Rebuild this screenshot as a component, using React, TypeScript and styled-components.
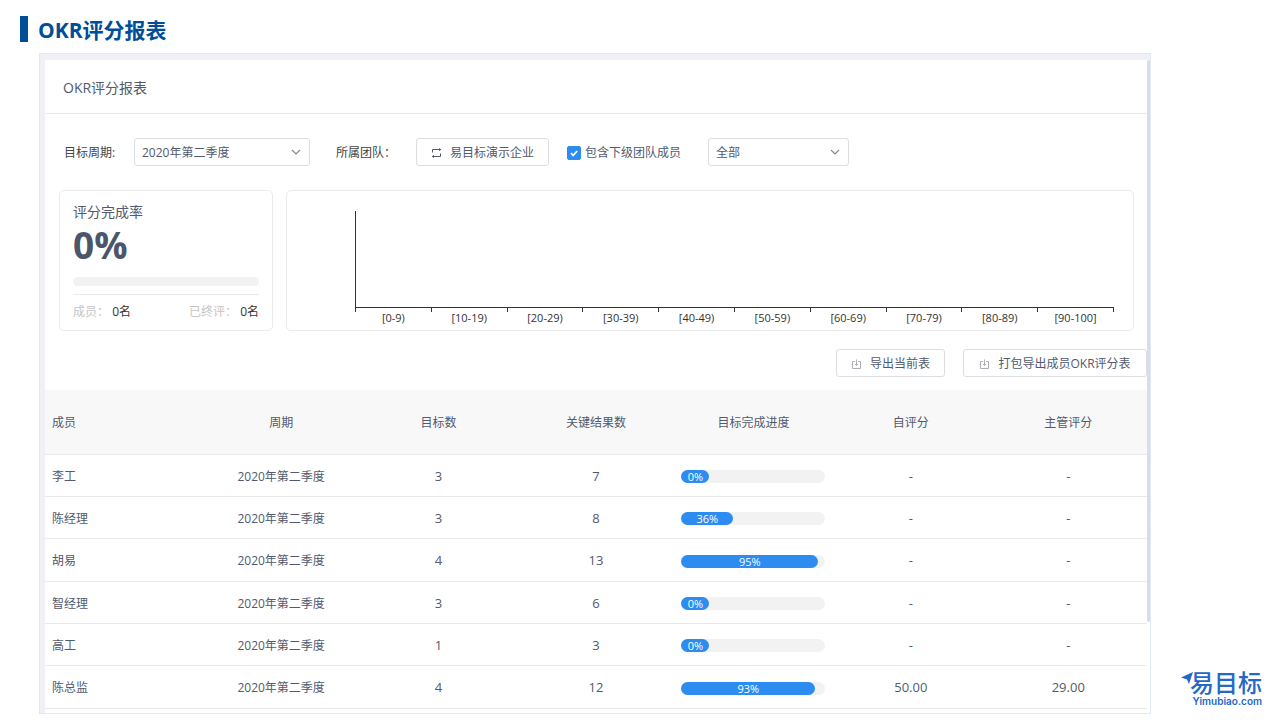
import React from "react";
import styled, { createGlobalStyle } from "styled-components";

const GlobalStyle = createGlobalStyle`
  * { box-sizing: border-box; }
  body {
    margin: 0;
    background: #fff;
    color: #515a6e;
    font: 12px/18px "Open Sans", "Noto Sans CJK SC", sans-serif;
  }
  button, select, input { font: inherit; color: inherit; }
`;

const Page = styled.div`
  display: grid;
  grid-template-columns: minmax(0, 1fr) 129px;
  padding: 16px 0 6px 20px;
`;

const Title = styled.h1`
  grid-column: 1 / -1;
  margin: 0 0 11px;
  padding: 2px 0 0 10px;
  border-left: 8px solid #004e98;
  color: #004e98;
  font-size: 21px;
  line-height: 24px;
  font-weight: 700;
`;

const Frame = styled.main`
  display: flex;
  margin-left: 19px;
  padding: 6px 0 0 5px;
  border: 1px solid #dfe8f3;
  background: #eff1f6;
`;

const Panel = styled.div`
  flex: 1;
  min-width: 0;
  padding-bottom: 4px;
  background: #fff;
`;

const ScrollRail = styled.div`
  width: 3px;
  background: #fff;
`;

const ScrollThumb = styled.div`
  height: 86%;
  border-radius: 2px;
  background: #dadee2;
`;

const PanelHeading = styled.h2`
  margin: 0;
  padding: 17px 18px 15px;
  border-bottom: 1px solid #e8eaec;
  font-size: 14px;
  line-height: 21px;
  font-weight: 400;
`;

const Filters = styled.form`
  display: flex;
  align-items: center;
  padding: 24px 19px;
`;

const FieldLabel = styled.label<{ $width: number }>`
  width: ${(p) => p.$width}px;
  padding-top: 2px;
  color: #444;
  white-space: nowrap;
`;

const SelectBox = styled.div<{ $width: number }>`
  display: grid;
  align-items: center;
  width: ${(p) => p.$width}px;
  margin-right: 26px;

  > * { grid-area: 1 / 1; }
  > svg { justify-self: end; margin-right: 9px; pointer-events: none; }
`;

const Select = styled.select`
  width: 100%;
  height: 28px;
  padding: 2px 24px 0 7px;
  appearance: none;
  border: 1px solid #dcdee2;
  border-radius: 3px;
  background: #fff;
`;

const Button = styled.button<{ $minWidth?: number }>`
  display: inline-flex;
  align-items: center;
  justify-content: center;
  gap: 8px;
  min-width: ${(p) => p.$minWidth ?? 0}px;
  height: 28px;
  padding: 2px 14px 0;
  border: 1px solid #dcdee2;
  border-radius: 3px;
  background: #fff;
  white-space: nowrap;
`;

const CheckLabel = styled.label`
  display: flex;
  align-items: center;
  gap: 4px;
  margin: 0 27px 0 18px;
  padding-top: 1px;
  white-space: nowrap;
`;

const Checkbox = styled.input`
  width: 14px;
  height: 14px;
  margin: 0;
  appearance: none;
  border: 1px solid #dcdee2;
  border-radius: 2px;

  &:checked {
    border-color: #2d8cf0;
    background: #2d8cf0 url("data:image/svg+xml,%3Csvg xmlns='http://www.w3.org/2000/svg' viewBox='0 0 12 12'%3E%3Cpath d='M3 6.2 5.2 8.4 9.2 4' fill='none' stroke='white' stroke-width='1.8'/%3E%3C/svg%3E") center / 12px no-repeat;
  }
`;

const Summary = styled.div`
  display: grid;
  grid-template-columns: 214px minmax(0, 1fr);
  gap: 13px;
  padding: 0 13px 0 14px;
`;

const Card = styled.section`
  height: 141px;
  border: 1px solid #ebebed;
  border-radius: 5px;
`;

const RateCard = styled(Card)`
  padding: 11px 13px 0;
`;

const RateTitle = styled.h3`
  margin: 0;
  font-size: 14px;
  line-height: 20px;
  font-weight: 400;
`;

const RateValue = styled.div`
  font-size: 37px;
  line-height: 46px;
  font-weight: 700;
  color: #4c566b;
`;

const RateTrack = styled.div`
  height: 9px;
  margin: 9px 0 8px;
  border-radius: 5px;
  background: #f2f2f2;
`;

const Totals = styled.div`
  display: flex;
  justify-content: space-between;
  padding-top: 8px;
  border-top: 1px solid #e8eaec;
  color: #c5c5c5;
`;

const Count = styled.span`
  color: #333;
`;

const ChartCard = styled(Card)`
  padding: 20px 19px 0 68px;
`;

const Plot = styled.div`
  height: 97px;
  border-left: 1px solid #333;
  border-bottom: 1px solid #333;
`;

const Axis = styled.ol`
  display: flex;
  height: 4px;
  margin: 0;
  padding: 0;
  border-left: 1px solid #333;
  list-style: none;
`;

const Tick = styled.li`
  flex: 1;
  height: 4px;
  border-right: 1px solid #333;
  color: #333;
  font-size: 11px;
  line-height: 20px;
  text-align: center;
`;

const Exports = styled.div`
  display: flex;
  justify-content: flex-end;
  gap: 18px;
  padding: 18px 0 13px;
`;

const Table = styled.table`
  width: 100%;
  table-layout: fixed;
  border-collapse: separate;
  border-spacing: 0;
`;

const HeadCell = styled.th`
  height: 65px;
  padding: 2px 0 0;
  border-bottom: 1px solid #e8eaec;
  background: #f8f8f9;
  font-weight: 400;

  &:first-child { padding-left: 7px; text-align: left; }
`;

const Row = styled.tr`
  height: 42px;

  &:nth-child(3n) { height: 43px; }
`;

const Cell = styled.td`
  padding: 2px 0 0;
  border-bottom: 1px solid #e8eaec;
  text-align: center;

  &:first-child { padding-left: 7px; text-align: left; }
`;

const NumberCell = styled(Cell)`
  padding-top: 0;
  font-size: 13px;
`;

const ProgressTrack = styled.div`
  width: 144px;
  height: 13px;
  margin: 0 auto;
  border-radius: 7px;
  background: #f2f2f2;
`;

const ProgressFill = styled.div`
  min-width: 28px;
  height: 13px;
  border-radius: 7px;
  background: #2d8cf0;
  color: #fff;
  font-size: 11px;
  line-height: 13px;
  text-align: center;
`;

const Brand = styled.a`
  align-self: end;
  justify-self: end;
  margin: 0 18px 8px 0;
  color: #2468c8;
  text-decoration: none;
`;

const BrandName = styled.span`
  display: flex;
  font: 500 24px/24px "Liberation Sans", "Noto Sans CJK SC", sans-serif;

  > svg { margin-right: -3px; }
`;

const BrandSite = styled.span`
  display: block;
  font: 600 10px/10px Inter, sans-serif;
  text-align: right;
`;

const Chevron = () => (
  <svg width="10" height="10" viewBox="0 0 10 10" fill="none" stroke="#7d8493" strokeWidth="1.1">
    <path d="M1 3 5 7 9 3" />
  </svg>
);

const SwapIcon = () => (
  <svg width="11" height="10" viewBox="0 0 11 10" fill="none" stroke="#515a6e">
    <path d="M1.5 4.5V1.5H9M9.5 5.5V8.5H2" />
    <path d="M8 0 10.3 1.5 8 3.2ZM3 6.8.7 8.5 3 10Z" fill="#515a6e" stroke="none" />
  </svg>
);

const DownloadIcon = () => (
  <svg width="11" height="11" viewBox="0 0 11 11" fill="none" stroke="#a9aeb9">
    <path d="M4 2.5H1.5V9.5H9.5V2.5H7M5.5 .5V6.5M4 5 5.5 6.5 7 5" />
  </svg>
);

const columns = ["成员", "周期", "目标数", "关键结果数", "目标完成进度", "自评分", "主管评分"];
const ranges = ["[0-9)", "[10-19)", "[20-29)", "[30-39)", "[40-49)", "[50-59)", "[60-69)", "[70-79)", "[80-89)", "[90-100]"];
const period = "2020年第二季度";
const members = [
  { name: "李工", goals: 3, results: 7, progress: 0, self: "-", manager: "-" },
  { name: "陈经理", goals: 3, results: 8, progress: 36, self: "-", manager: "-" },
  { name: "胡易", goals: 4, results: 13, progress: 95, self: "-", manager: "-" },
  { name: "智经理", goals: 3, results: 6, progress: 0, self: "-", manager: "-" },
  { name: "高工", goals: 1, results: 3, progress: 0, self: "-", manager: "-" },
  { name: "陈总监", goals: 4, results: 12, progress: 93, self: "50.00", manager: "29.00" },
];

export default function App() {
  return (
    <Page>
      <GlobalStyle />
      <Title>OKR评分报表</Title>
      <Frame>
        <Panel>
          <PanelHeading>OKR评分报表</PanelHeading>
          <Filters>
            <FieldLabel $width={70} htmlFor="period">目标周期:</FieldLabel>
            <SelectBox $width={176}>
              <Select id="period"><option>{period}</option></Select>
              <Chevron />
            </SelectBox>
            <FieldLabel $width={80} htmlFor="team">所属团队：</FieldLabel>
            <Button id="team" type="button"><SwapIcon />易目标演示企业</Button>
            <CheckLabel><Checkbox type="checkbox" defaultChecked />包含下级团队成员</CheckLabel>
            <SelectBox $width={141}>
              <Select aria-label="成员"><option>全部</option></Select>
              <Chevron />
            </SelectBox>
          </Filters>
          <Summary>
            <RateCard>
              <RateTitle>评分完成率</RateTitle>
              <RateValue>0%</RateValue>
              <RateTrack />
              <Totals>
                <span>成员： <Count>0名</Count></span>
                <span>已终评： <Count>0名</Count></span>
              </Totals>
            </RateCard>
            <ChartCard>
              <Plot />
              <Axis>{ranges.map((r) => <Tick key={r}>{r}</Tick>)}</Axis>
            </ChartCard>
          </Summary>
          <Exports>
            <Button type="button"><DownloadIcon />导出当前表</Button>
            <Button type="button" $minWidth={184}><DownloadIcon />打包导出成员OKR评分表</Button>
          </Exports>
          <Table>
            <thead>
              <tr>{columns.map((c) => <HeadCell key={c} scope="col">{c}</HeadCell>)}</tr>
            </thead>
            <tbody>
              {members.map((m) => (
                <Row key={m.name}>
                  <Cell>{m.name}</Cell>
                  <Cell>{period}</Cell>
                  <NumberCell>{m.goals}</NumberCell>
                  <NumberCell>{m.results}</NumberCell>
                  <Cell>
                    <ProgressTrack>
                      <ProgressFill style={{ width: `${m.progress}%` }}>{m.progress}%</ProgressFill>
                    </ProgressTrack>
                  </Cell>
                  <NumberCell>{m.self}</NumberCell>
                  <NumberCell>{m.manager}</NumberCell>
                </Row>
              ))}
            </tbody>
          </Table>
        </Panel>
        <ScrollRail><ScrollThumb /></ScrollRail>
      </Frame>
      <Brand href="#">
        <BrandName>
          <svg width="12" height="13" viewBox="0 0 12 13" fill="currentColor"><path d="M0 5.5 12 0 8 12 6 7.5Z" /></svg>
          易目标
        </BrandName>
        <BrandSite>Yimubiao.com</BrandSite>
      </Brand>
    </Page>
  );
}
